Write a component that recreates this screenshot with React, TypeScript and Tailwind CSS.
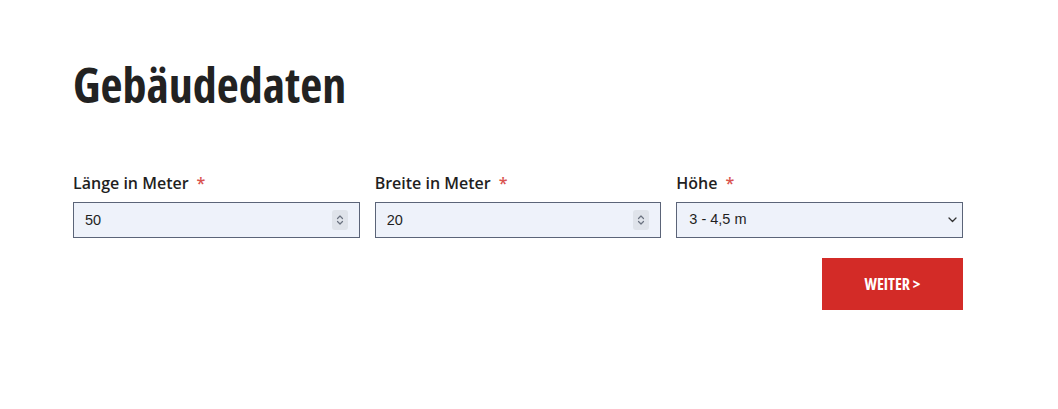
import { useState } from 'react'

const condensed = { fontFamily: '"Open Sans", "DejaVu Sans Condensed", sans-serif' }
const fieldFont = { fontFamily: '"Liberation Sans", Arial, sans-serif' }

function Spinner() {
  return (
    <span className="pointer-events-none absolute right-[12px] top-1/2 flex h-[20px] w-[16px] -translate-y-1/2 items-center justify-center rounded-[3px] bg-[#dfe3ea]">
      <svg width="8" height="12" viewBox="0 0 8 12" fill="none" stroke="#6b7280" strokeWidth="1.2" strokeLinecap="round" strokeLinejoin="round">
        <path d="M1.5 4.5 4 2l2.5 2.5" />
        <path d="M1.5 7.5 4 10l2.5-2.5" />
      </svg>
    </span>
  )
}

function Label({ children }: { children: string }) {
  return (
    <label className="mb-[7px] flex items-center text-[16px] font-semibold leading-[24px] text-[#1f1f1f]">
      {children}
      <span className="ml-[8px] text-[#d9534f]">*</span>
    </label>
  )
}

export default function App() {
  const [laenge, setLaenge] = useState('50')
  const [breite, setBreite] = useState('20')
  const [hoehe, setHoehe] = useState('3-4.5')

  return (
    <div className="min-h-[409px] bg-white px-[73px] pt-[53px]" style={{ fontFamily: '"Open Sans", "Noto Sans", sans-serif' }}>
      <div className="w-[890px]">
        <h1 className="text-[48px] font-bold leading-[64px] text-[#222] font-stretch-condensed" style={condensed}>
          Gebäudedaten
        </h1>

        <div className="mt-[54px] grid grid-cols-3 gap-x-[15px]">
          <div>
            <Label>Länge in Meter</Label>
            <div className="relative">
              <input
                value={laenge}
                onChange={(e) => setLaenge(e.target.value)}
                className="h-[36px] w-full border border-[#5b6478] bg-[#eef2fa] px-[11px] text-[14.5px] text-[#1f1f1f] outline-none"
                style={fieldFont}
              />
              <Spinner />
            </div>
          </div>
          <div>
            <Label>Breite in Meter</Label>
            <div className="relative">
              <input
                value={breite}
                onChange={(e) => setBreite(e.target.value)}
                className="h-[36px] w-full border border-[#5b6478] bg-[#eef2fa] px-[11px] text-[14.5px] text-[#1f1f1f] outline-none"
                style={fieldFont}
              />
              <Spinner />
            </div>
          </div>
          <div>
            <Label>Höhe</Label>
            <div className="relative">
              <select
                value={hoehe}
                onChange={(e) => setHoehe(e.target.value)}
                className="h-[36px] w-full appearance-none border border-[#5b6478] bg-[#eef2fa] px-[12px] text-[14.5px] text-[#1f1f1f] outline-none"
                style={fieldFont}
              >
                <option value="0-3">0 - 3 m</option>
                <option value="3-4.5">3 - 4,5 m</option>
                <option value="4.5-6">4,5 - 6 m</option>
              </select>
              <svg className="pointer-events-none absolute right-[6px] top-1/2 -translate-y-1/2" width="9" height="6" viewBox="0 0 9 6" fill="none" stroke="#333" strokeWidth="1.3" strokeLinecap="round" strokeLinejoin="round">
                <path d="M1 1l3.5 3.5L8 1" />
              </svg>
            </div>
          </div>
        </div>

        <div className="mt-[20px] flex justify-end">
          <button
            className="h-[52px] w-[141px] bg-[#d32b27] text-[16px] font-bold text-white font-stretch-condensed"
            style={condensed}
          >
            WEITER &gt;
          </button>
        </div>
      </div>
    </div>
  )
}
